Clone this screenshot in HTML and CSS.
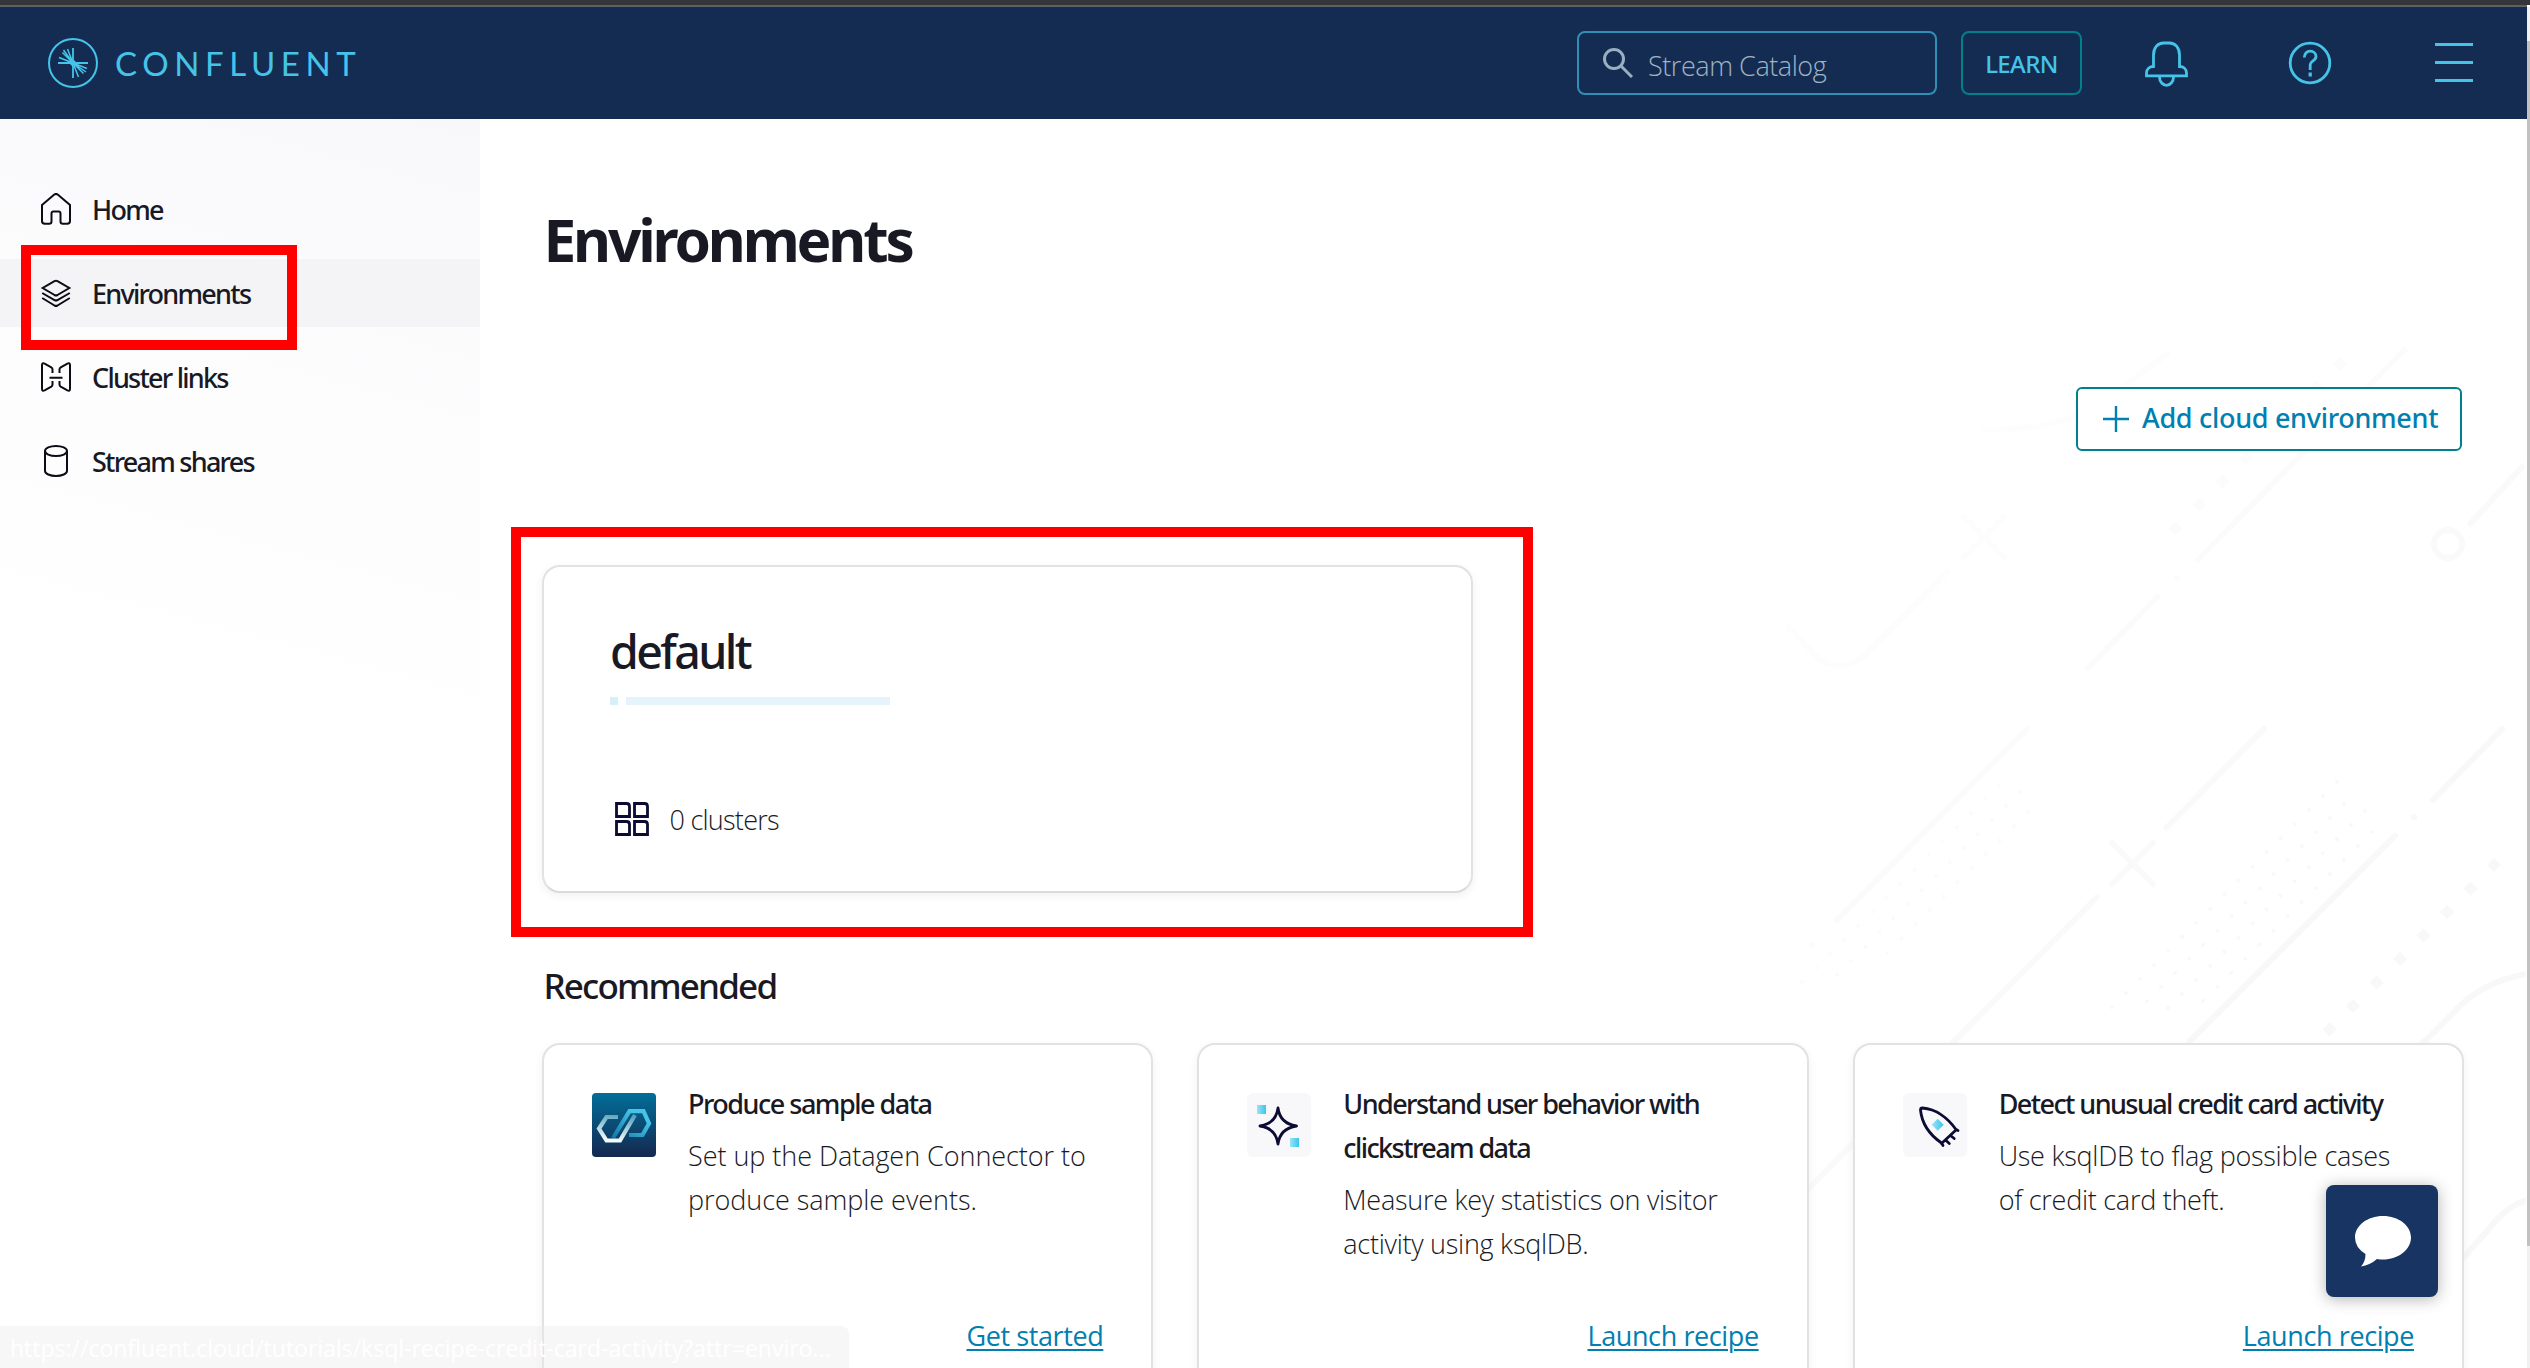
FILE: index.html
```html
<!DOCTYPE html>
<html lang="en">
<head>
<meta charset="utf-8">
<title>Environments | Confluent</title>
<link rel="stylesheet" href="styles.css">
</head>
<body>
<div class="page">
  <header class="topbar">
    <div class="logo">
      <svg class="logo-mark" viewBox="0 0 50 50" fill="none" stroke="#45c4e8">
        <circle cx="25" cy="25" r="24" stroke-width="2"/>
        <path stroke-width="1.8" d="M25 10v30M10 25h30"/>
        <path stroke-width="1.5" d="M25 25 19.500 11M25 25 14.500 14.500M25 25 11 19.500M25 25 15.500 12M25 25 39 30.500M25 25 35.500 35.500M25 25 30.500 39M25 25 38 34"/>
        <circle cx="25" cy="25" r="2.500" fill="#45c4e8"/>
      </svg>
      <span class="logo-text">CONFLUENT</span>
    </div>
    <div class="search">
      <svg class="search-icon" viewBox="0 0 30 30" fill="none" stroke="#9aafc2" stroke-width="3"><circle cx="11" cy="11" r="9.500"/><path d="M18 18 29 29"/></svg>
      <span>Stream Catalog</span>
    </div>
    <a class="learn">LEARN</a>
    <svg class="icon-bell" viewBox="0 0 43 46" fill="none" stroke="#45c4e8" stroke-width="2.800"><path d="M8.500 25.500V14C8.500 6.500 13 2 18.500 2h6C30 2 34.500 6.500 34.500 14v11.500c4 0 7 2.500 7 6.500v2.800h-40V32c0-4 3-6.500 7-6.500zM14.500 36c0 5 3.500 8.300 7 8.300s7-3.300 7-8.300"/></svg>
    <svg class="icon-help" viewBox="0 0 44 44" fill="none" stroke="#45c4e8" stroke-width="2.800"><circle cx="22" cy="22" r="19.800"/><path d="M16.300 16.500c0-3.800 2.500-6.300 5.900-6.300 3.300 0 5.800 2.400 5.800 5.400 0 4.600-5.800 4-5.800 8.200V29"/><path stroke-width="3.200" d="M22.200 31.500v4"/></svg>
    <svg class="icon-menu" viewBox="0 0 38 40" stroke="#45c4e8" stroke-width="3"><path d="M0 1.500h38M0 19.500h38M0 37.500h38"/></svg>
  </header>

  <div class="body">
    <nav class="sidebar">
      <a class="nav-item">
        <svg viewBox="0 0 32 32"><path d="M2 12 14 1.800q2-1.600 4 0L30 12v16q0 2.800-2.800 2.800h-4.400q-2.300 0-2.300-2.300V20.500q0-2-2-2h-5q-2 0-2 2v8q0 2.300-2.300 2.300H4.800Q2 30.800 2 28z"/></svg>
        <span>Home</span>
      </a>
      <a class="nav-item nav-item-active">
        <svg viewBox="0 0 32 32"><path d="M14.500 4.200q1.500-.8 3 0L29.300 11 17.500 18q-1.500.8-3 0L2.700 11zM2.200 16l12.300 7q1.500.8 3 0l12.300-7M2.200 21l12.300 7.500q1.500.8 3 0L29.800 21"/></svg>
        <span>Environments</span>
      </a>
      <a class="nav-item">
        <svg viewBox="0 0 32 32"><path d="M12.500 12V8.500q0-1.500-1.200-2.200L4.600 2.600Q2 1.500 2 4v24q0 2.500 2.600 1.400l6.700-3.700q1.200-.7 1.200-2.200V20M19.500 12V8.500q0-1.500 1.200-2.200l6.700-3.700Q30 1.500 30 4v24q0 2.500-2.600 1.400l-6.700-3.700q-1.200-.7-1.200-2.200V20M9.500 16.800h13"/></svg>
        <span>Cluster links</span>
      </a>
      <a class="nav-item">
        <svg viewBox="0 0 32 32"><ellipse cx="16" cy="6" rx="11" ry="5"/><path d="M5 6v20c0 2.700 5 5 11 5s11-2.300 11-5V6"/></svg>
        <span>Stream shares</span>
      </a>
    </nav>

    <main class="main">
      <svg class="pattern" viewBox="480 119 2046 1249" fill="none" stroke="url(#fade)" stroke-width="6" stroke-linecap="round">
        <defs>
          <linearGradient id="fade" gradientUnits="userSpaceOnUse" x1="1840" y1="300" x2="2400" y2="860"><stop offset="0" stop-color="#ffffff"/><stop offset="1" stop-color="#f8f8f9"/></linearGradient>
        </defs>
        <path d="M2404 350 2198 560M2157 597 2088 668M2177 578h.1M2522 467 2470 524M1985 430q80 0 120-30t62-46M1789 627l25 27q24 24 52 0L1947 572M1964 517l40 40M2004 517l-40 40"/>
        <circle cx="2448" cy="544" r="14"/>
        <path d="M2027 729 1837 920M1812 945h.1M2264 729 2166 828M2112 843l41 41M2153 843l-41 41M2097 897 1800 1197M2502 729 2433 800M2414 817h.1M2395 836 2190 1041M2526 974q-45 8-72 38L2410 1056M2526 1200q-22 8-38 30L2440 1284"/>
        <path stroke-width="4" stroke-dasharray="0 19.900" d="M2337 782 2107 1012M2344 804 2136 1012M2365 811 2164 1012M2372 832 2192 1012M1999 785 1800 984M2006 806 1830 982M2020 792 1850 962M2028 812 1880 960"/>
        <path stroke-width="10" stroke-linecap="butt" stroke-dasharray="10 23.200" d="M2497.500 861.500 2320 1039M2343.500 360.500 2172 532"/>
      </svg>

      <h1>Environments</h1>

      <div class="actions">
        <a class="add-button">
          <svg viewBox="0 0 28 28" stroke="#0080b0" stroke-width="2.400"><path d="M14 1v26M1 14h26"/></svg>
          <span>Add cloud environment</span>
        </a>
      </div>

      <section class="card env-card">
        <h2>default</h2>
        <div class="usage"><i class="usage-dot"></i><i class="usage-bar"></i></div>
        <div class="clusters">
          <svg viewBox="0 0 34 34" fill="none" stroke="#0b0b33" stroke-width="2.800"><path d="M1.500 1.500h10q3 0 3 3v10h-13zM19.500 1.500h10q3 0 3 3v10h-13zM1.500 19.500h10q3 0 3 3v10h-13zM19.500 19.500h10q3 0 3 3v10h-13z"/></svg>
          <span>0 clusters</span>
        </div>
        <div class="highlight highlight-card"></div>
      </section>

      <h3>Recommended</h3>
      <div class="recommended">
        <article class="card rec-card">
          <svg class="rec-icon" viewBox="0 0 64 64" fill="none" stroke-width="4.200">
            <defs>
              <linearGradient id="tile" x1="0" y1="0" x2="0" y2="1"><stop offset="0" stop-color="#016e99"/><stop offset="1" stop-color="#15284f"/></linearGradient>
              <linearGradient id="ice" gradientUnits="userSpaceOnUse" x1="28" y1="20" x2="24" y2="48"><stop offset="0" stop-color="#4d9db8"/><stop offset="1" stop-color="#f4fbff"/></linearGradient>
              <linearGradient id="aqua" gradientUnits="userSpaceOnUse" x1="22" y1="44" x2="40" y2="18"><stop offset="0" stop-color="#0f7ba8"/><stop offset="1" stop-color="#45c4e8"/></linearGradient>
            </defs>
            <rect width="64" height="64" rx="4" fill="url(#tile)"/>
            <path stroke="url(#aqua)" d="M37 42h13.500L57 30.500 51.500 18.200H37.500L21 45"/>
            <path stroke="url(#ice)" d="M26 24H14.500L7 35.500 14.500 47.500H28L43 22"/>
          </svg>
          <div class="rec-body">
            <h4>Produce sample data</h4>
            <p>Set up the Datagen Connector to<br>produce sample events.</p>
            <a class="rec-link">Get started</a>
          </div>
        </article>
        <article class="card rec-card">
          <svg class="rec-icon" viewBox="0 0 64 64" fill="none">
            <defs><linearGradient id="cyan"><stop offset="0" stop-color="#9be3f6"/><stop offset="1" stop-color="#38c6ec"/></linearGradient></defs>
            <rect width="64" height="64" rx="6" fill="#f8f8fb"/>
            <path fill="url(#cyan)" d="M10 12h9v9h-9z"/><path fill="url(#cyan)" d="M43 45h9v9h-9z"/>
            <path stroke="#0b0b33" stroke-width="2.800" stroke-linejoin="round" d="M31 15q2 15.500 18.500 18Q33 35.500 31 51 29 35.500 13 33 29 30.500 31 15z"/>
          </svg>
          <div class="rec-body">
            <h4 class="two-line">Understand user behavior with<br>clickstream data</h4>
            <p class="tight">Measure key statistics on visitor<br>activity using ksqlDB.</p>
            <a class="rec-link">Launch recipe</a>
          </div>
        </article>
        <article class="card rec-card">
          <svg class="rec-icon" viewBox="0 0 64 64" fill="none">
            <rect width="64" height="64" rx="6" fill="#f8f8fb"/>
            <path fill="url(#cyan)" d="M34.700 25.700 40.700 31.700 34.700 37.700 28.700 31.700z"/>
            <path stroke="#0b0b33" stroke-width="2.800" stroke-linejoin="round" stroke-linecap="round" d="M40 52.500 38.500 50C27 42 19 32 17.500 17q0-2 2-2C33 16 45 25 53 36.500l2 1M38.500 50.500 53.500 36.500M42.500 47l3.800 3.500M47.500 42.500 51.200 45.500"/>
          </svg>
          <div class="rec-body">
            <h4 class="two-line">Detect unusual credit card activity</h4>
            <p class="tight">Use ksqlDB to flag possible cases<br>of credit card theft.</p>
            <a class="rec-link">Launch recipe</a>
          </div>
        </article>
      </div>
    </main>
  </div>

  <div class="highlight highlight-nav"></div>
  <button class="chat" aria-label="Chat">
    <svg viewBox="0 0 56 51"><path fill="#fff" d="M28 0c15.500 0 28 9.500 28 21.500S43.500 43.500 28 43.500q-3 0-6-.6Q15 49 6 50.500q4.500-5 4.500-12.500Q0 31.500 0 21.500C0 9.500 12.500 0 28 0z"/></svg>
  </button>
  <div class="status">https://confluent.cloud/tutorials/ksql-recipe-credit-card-activity?attr=enviro...</div>
  <div class="scrollbar"><div class="thumb"></div></div>
</div>
</body>
</html>
```
FILE: styles.css
```css
* { box-sizing: border-box; }

body {
  margin: 0;
  overflow: hidden;
  font-family: "Noto Sans", "Open Sans", sans-serif;
  font-size: 27px;
  color: #191924;
}

h1, h2, h3, h4, p { margin: 0; }

.page {
  position: relative;
  width: 2530px;
  height: 1368px;
  overflow: hidden;
  display: flex;
  flex-direction: column;
  border-top: 5px solid #35363a;
  background: #fff;
}

.topbar {
  flex: none;
  width: 2527px;
  height: 114px;
  display: flex;
  align-items: center;
  padding: 0 54px 0 48px;
  background: #152c52;
  border-top: 2px solid #5f6062;
}

.logo { display: flex; align-items: center; gap: 17px; margin-right: auto; }
.logo-mark { width: 50px; height: 50px; }
.logo-text {
  font: 400 33px/50px Lato, sans-serif;
  letter-spacing: 5.6px;
  color: #45c4e8;
  padding-bottom: 1px;
}

.search {
  width: 360px;
  height: 64px;
  margin-right: 24px;
  display: flex;
  align-items: center;
  gap: 15px;
  padding-left: 24px;
  border: 2px solid #318fb5;
  border-radius: 8px;
  font-family: "Open Sans", sans-serif;
  font-weight: 300;
  color: #9fb3c5;
}
.search-icon { width: 30px; height: 30px; }
.search span { padding-top: 4px; letter-spacing: -0.45px; }

.learn {
  width: 121px;
  height: 64px;
  margin-right: 63px;
  border: 2px solid #00808a;
  border-radius: 8px;
  font-size: 24px;
  font-weight: 500;
  line-height: 62px;
  letter-spacing: -0.6px;
  text-align: center;
  color: #45c4e8;
}

.icon-bell { width: 43px; height: 46px; margin: 2px 100px 0 0; }
.icon-help { width: 44px; height: 44px; margin-right: 103px; }
.icon-menu { width: 38px; height: 40px; }

.body { flex: 1; display: flex; width: 2526px; min-height: 0; }

.sidebar {
  flex: none;
  width: 480px;
  display: flex;
  flex-direction: column;
  gap: 16px;
  padding-top: 56px;
  background: linear-gradient(195deg, #f8f8fb 0, #fcfcfd 280px, #fff 640px);
}
.nav-item {
  height: 68px;
  display: flex;
  align-items: center;
  gap: 20px;
  padding-left: 40px;
  font-weight: 500;
  letter-spacing: -1.75px;
}
.nav-item-active { background: #f4f4f6; }
.nav-item svg {
  width: 32px;
  height: 32px;
  fill: none;
  stroke: #0c0c14;
  stroke-width: 2;
}

.main {
  position: relative;
  flex: 1;
  padding: 80px 62px 0;
}
.main > * { position: relative; }
.main > .pattern { position: absolute; top: 0; left: 0; width: 2046px; height: 1249px; }

h1 {
  font-size: 58.5px;
  font-weight: 700;
  line-height: 80px;
  letter-spacing: -3.15px;
  padding-left: 1.5px;
}

.actions { display: flex; justify-content: flex-end; margin-top: 108px; padding-right: 2px; }
.add-button {
  height: 64px;
  width: 386px;
  display: flex;
  align-items: center;
  gap: 12px;
  padding-left: 24px;
  border: 2px solid #00808a;
  border-radius: 6px;
  background: #fff;
  color: #0080b0;
  font-weight: 500;
  letter-spacing: -0.3px;
}
.add-button svg { width: 28px; height: 28px; }
.add-button span { padding-bottom: 3px; }

.card {
  border: 2px solid #e2e2e4;
  border-bottom-color: #dadadb;
  border-radius: 18px;
  background: #fff;
  box-shadow: 0 3px 10px rgba(0, 0, 0, 0.06);
}

.env-card { width: 931px; height: 328px; margin-top: 114px; padding: 54px 66px; }
h2 {
  font-size: 46.5px;
  font-weight: 500;
  line-height: 60px;
  letter-spacing: -2.6px;
}
.usage { display: flex; gap: 8px; margin-top: 16px; }
.usage-dot { width: 8px; height: 8px; background: #d6f0f7; }
.usage-bar { width: 264px; height: 8px; background: #e5f4fb; }
.clusters {
  display: flex;
  align-items: center;
  gap: 20.5px;
  margin-top: 95px;
  padding-left: 5px;
  font-family: "Open Sans", sans-serif;
  font-weight: 300;
  letter-spacing: -0.75px;
}
.clusters svg { width: 34px; height: 34px; }
.clusters span { padding-top: 1px; }

h3 {
  margin-top: 68px;
  padding-left: 1.5px;
  font-size: 35px;
  font-weight: 500;
  line-height: 50px;
  letter-spacing: -1.8px;
}

.recommended {
  display: grid;
  grid-template-columns: repeat(3, 1fr);
  gap: 44px;
  margin-top: 32px;
}
.rec-card {
  height: 364px;
  display: flex;
  gap: 32px;
  padding: 48px 48px 47px;
}
.rec-icon { flex: none; width: 64px; height: 64px; }
.rec-body {
  flex: 1;
  display: flex;
  flex-direction: column;
  margin-top: -11px;
  line-height: 44px;
  white-space: nowrap;
}
h4 { font-size: 27px; font-weight: 500; letter-spacing: -1.5px; }
.two-line { letter-spacing: -1.58px; }
.rec-body p {
  margin-top: 8px;
  font-family: "Open Sans", sans-serif;
  font-weight: 300;
  letter-spacing: -0.05px;
}
.rec-body .tight { letter-spacing: -0.27px; }
.rec-link {
  margin-top: auto;
  align-self: flex-end;
  font-family: "Open Sans", sans-serif;
  font-weight: 400;
  letter-spacing: -0.4px;
  color: #0080b0;
  text-decoration: underline;
  text-decoration-thickness: 2px;
  text-underline-offset: 3px;
}

.highlight { position: absolute; border: 10px solid #f00; pointer-events: none; }
.highlight-nav { left: 21px; top: 240px; width: 276px; height: 105px; }
.highlight-card { left: -33px; top: -40px; width: 1022px; height: 410px; }

.chat {
  position: absolute;
  left: 2326px;
  top: 1180px;
  width: 112px;
  height: 112px;
  padding: 0;
  border: 0;
  border-radius: 8px;
  background: #183462;
  box-shadow: 0 2px 16px rgba(0, 0, 0, 0.3);
}
.chat svg { display: block; width: 56px; height: 51px; margin: 0 auto 0 29px; }

.status {
  position: absolute;
  left: 0;
  bottom: 0;
  width: 849px;
  height: 42px;
  padding-left: 10px;
  border-top-right-radius: 8px;
  background: rgba(235, 235, 236, 0.4);
  font: 400 23px/45px "Open Sans", sans-serif;
  white-space: nowrap;
  color: #fff;
}

.scrollbar {
  position: absolute;
  top: 2px;
  right: 0;
  width: 3px;
  height: 1361px;
  background: #f1f1f1;
}
.thumb { height: 1205px; margin-top: 34px; background: #c1c1c1; }
```
